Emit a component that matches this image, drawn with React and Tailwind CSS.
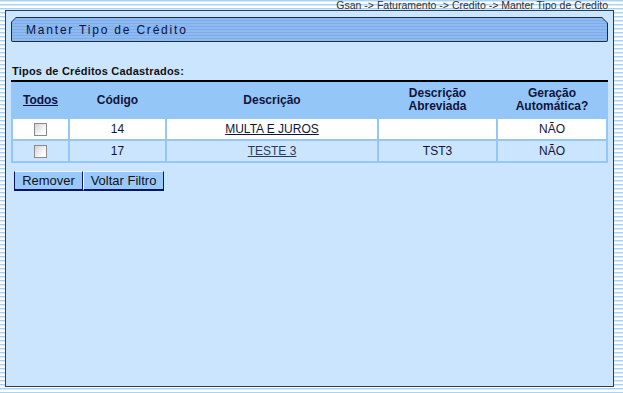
import React from 'react';

const rows = [
  { codigo: '14', descricao: 'MULTA E JUROS', abrev: '', auto: 'NÃO', bg: 'bg-white', link: 'text-[#10143a]' },
  { codigo: '17', descricao: 'TESTE 3', abrev: 'TST3', auto: 'NÃO', bg: 'bg-[#cbe5fe]', link: 'text-[#2d3a5e]' },
];

function Checkbox() {
  return (
    <span className="inline-block w-[13px] h-[13px] border border-[#8a8a8a] bg-[linear-gradient(135deg,#d4d4d4,#ffffff_80%)]"></span>
  );
}

export default function App() {
  return (
    <div className="w-[623px] h-[393px] overflow-hidden font-['Liberation_Sans',Arial,sans-serif] bg-[repeating-linear-gradient(to_bottom,#a9d3f4_0px,#a9d3f4_1px,#d6ebfb_1px,#d6ebfb_2px,#ffffff_2px,#ffffff_4px)]">
      {/* breadcrumb */}
      <div className="h-[10px] pr-[15px] flex justify-end items-center text-[10.5px] leading-[10px] text-[#333333]">
        Gsan -&gt; Faturamento -&gt; Credito -&gt; Manter Tipo de Credito
      </div>

      <div className="ml-[5px] w-[609px] h-[377px] border border-[#293c5a] bg-[#cbe5fe] pt-[6px] pl-[5px] pr-[5px]">
        {/* title bar */}
        <div className="h-[25px] bg-[#1c2a44] rounded-b-[2px] [clip-path:polygon(5px_0,calc(100%_-_6px)_0,100%_6px,100%_100%,0_100%,0_5px)] p-[1px]">
          <div className="h-full rounded-b-[1px] bg-[repeating-linear-gradient(to_bottom,#8dbaf0_0px,#8dbaf0_2px,#7eace8_2px,#7eace8_3px)] [clip-path:polygon(4px_0,calc(100%_-_5px)_0,100%_5px,100%_100%,0_100%,0_4px)] flex items-center pl-[14px] text-[12px] tracking-[1.8px] text-[#0c1240]">
            Manter Tipo de Crédito
          </div>
        </div>

        <div className="mt-[22px] h-[14px] flex items-center pl-[1px] text-[11px] tracking-[0.2px] font-bold text-[#111111]">
          Tipos de Créditos Cadastrados:
        </div>

        {/* table */}
        <div className="mt-[2px] border-t-2 border-black bg-[#95c6f8] px-[2px] pb-[2px] grid grid-cols-[55px_95px_210px_117px_1fr] gap-[2px] text-[12px] text-[#10143a]">
          <div className="h-[35px] flex items-center justify-center font-bold underline text-[#0c1240]">Todos</div>
          <div className="h-[35px] flex items-center justify-center font-bold">Código</div>
          <div className="h-[35px] flex items-center justify-center font-bold">Descrição</div>
          <div className="h-[35px] flex items-center justify-center text-center font-bold leading-[13px]">Descrição<br />Abreviada</div>
          <div className="h-[35px] flex items-center justify-center text-center font-bold leading-[13px]">Geração<br />Automática?</div>

          {rows.map((r) => (
            <React.Fragment key={r.codigo}>
              <div className={`h-[20px] flex items-center justify-center ${r.bg}`}>
                <Checkbox />
              </div>
              <div className={`h-[20px] flex items-center justify-center ${r.bg}`}>{r.codigo}</div>
              <div className={`h-[20px] flex items-center justify-center ${r.bg}`}>
                <span className={`underline ${r.link}`}>{r.descricao}</span>
              </div>
              <div className={`h-[20px] flex items-center justify-center ${r.bg}`}>{r.abrev}</div>
              <div className={`h-[20px] flex items-center justify-center ${r.bg}`}>{r.auto}</div>
            </React.Fragment>
          ))}
        </div>

        {/* buttons */}
        <div className="mt-[8px] ml-[3px] flex">
          <button className="h-[20px] w-[69px] bg-[#99c9fb] border border-[#0b1660] border-t-[#e8f3ff] border-b-2 text-[13px] leading-none text-[#111111]">
            Remover
          </button>
          <button className="h-[20px] w-[81px] bg-[#99c9fb] border border-[#0b1660] border-t-[#e8f3ff] border-l-white border-b-2 text-[13px] leading-none text-[#111111]">
            Voltar Filtro
          </button>
        </div>
      </div>
    </div>
  );
}
